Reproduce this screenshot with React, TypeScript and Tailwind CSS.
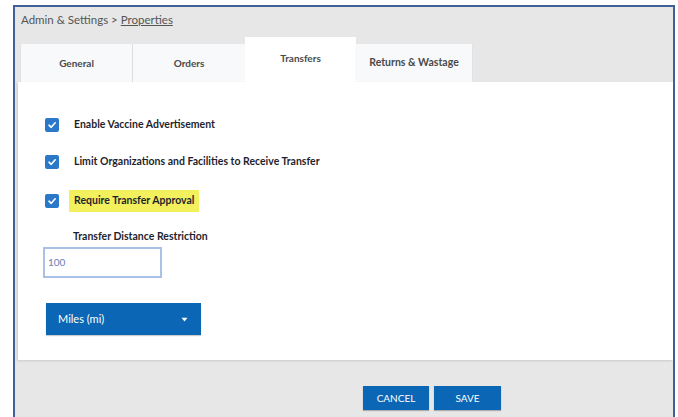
import React from "react";

const font = { fontFamily: "Lato, 'Open Sans', 'Liberation Sans', sans-serif" };

function Check() {
  return (
    <span className="flex h-[14px] w-[14px] shrink-0 items-center justify-center rounded-[2px] bg-[#2b78c9]">
      <svg width="10" height="10" viewBox="0 0 10 10" fill="none">
        <path d="M2 5.2 L4.2 7.3 L8.2 2.8" stroke="white" strokeWidth="1.6" strokeLinecap="round" strokeLinejoin="round" />
      </svg>
    </span>
  );
}

function Row({ label, highlight }: { label: string; highlight?: boolean }) {
  return (
    <div className="flex h-[14px] items-center">
      <Check />
      {highlight ? (
        <span className="ml-[10px] flex h-[22px] items-center bg-[#f2f05c] px-[5px] text-[10.5px] font-bold text-[#1f1f2e]">
          {label}
        </span>
      ) : (
        <span className="ml-[15px] text-[10.5px] font-bold text-[#1f1f2e]">{label}</span>
      )}
    </div>
  );
}

export default function App() {
  return (
    <div className="h-[417px] w-[678px] overflow-hidden bg-white pl-[13px] pr-[3px] pt-[5px]" style={font}>
      <div className="flex h-[420px] flex-col border-l-2 border-r-2 border-t-2 border-[#3e6197] bg-[#e6e7e6]">
        <div className="flex h-[30px] items-start pl-[6px] pt-[4px] text-[11.5px] text-[#555]">
          <span>Admin &amp; Settings &gt; </span>
          <span className="ml-[3px] underline">Properties</span>
        </div>
        <div className="ml-[6px] flex h-[45px] items-end">
          <div className="flex h-[38px] w-[112px] items-center justify-center border-r border-[#e2e3e3] bg-[#f8f9fa] text-[10px] font-bold text-[#4a4a4a] shadow-[0_1px_1px_rgba(0,0,0,0.12)]">
            General
          </div>
          <div className="flex h-[38px] w-[112px] items-center justify-center bg-[#f8f9fa] text-[10px] font-bold text-[#4a4a4a] shadow-[0_1px_1px_rgba(0,0,0,0.12)]">
            Orders
          </div>
          <div className="flex h-[45px] w-[111px] justify-center bg-white pt-[14px] text-[10px] font-bold text-[#4a4a4a]">
            Transfers
          </div>
          <div className="flex h-[38px] w-[116px] items-center justify-center bg-[#f8f9fa] text-[10.5px] font-bold text-[#4a4a4a] shadow-[0_1px_1px_rgba(0,0,0,0.12)]">
            Returns &amp; Wastage
          </div>
        </div>
        <div className="ml-[3px] flex h-[278px] flex-col bg-white pl-[27px] pt-[36px] shadow-[-1px_1px_2px_rgba(0,0,0,0.12)]">
          <Row label="Enable Vaccine Advertisement" />
          <div className="h-[23px]" />
          <Row label="Limit Organizations and Facilities to Receive Transfer" />
          <div className="h-[25px]" />
          <Row label="Require Transfer Approval" highlight />
          <div className="mt-[22px] pl-[28px] text-[10.5px] font-bold leading-[12px] text-[#1f1f2e]">
            Transfer Distance Restriction
          </div>
          <div className="ml-[-2px] mt-[5px] flex h-[31px] w-[119px] items-center border-2 border-[#a9c1e6] pl-[3px] text-[10px] text-[#6b7db5]">
            100
          </div>
          <div className="ml-[1px] mt-[25px] flex h-[32px] w-[155px] items-center justify-between bg-[#0b67b6] pl-[12px] pr-[13px] text-[11px] text-white shadow-[0_1px_1px_rgba(0,0,0,0.2)]">
            <span>Miles (mi)</span>
            <svg width="7" height="5" viewBox="0 0 7 5">
              <path d="M0.5 0.8 L6.5 0.8 L3.5 4.5 Z" fill="white" />
            </svg>
          </div>
        </div>
        <div className="mt-[26px] flex gap-[5px] pl-[348px]">
          <div className="flex h-[24px] w-[66px] items-center justify-center bg-[#0b67b6] text-[10px] text-white shadow-[0_1px_1px_rgba(0,0,0,0.25)]">
            CANCEL
          </div>
          <div className="flex h-[24px] w-[67px] items-center justify-center bg-[#0b67b6] text-[10px] text-white shadow-[0_1px_1px_rgba(0,0,0,0.25)]">
            SAVE
          </div>
        </div>
      </div>
    </div>
  );
}
